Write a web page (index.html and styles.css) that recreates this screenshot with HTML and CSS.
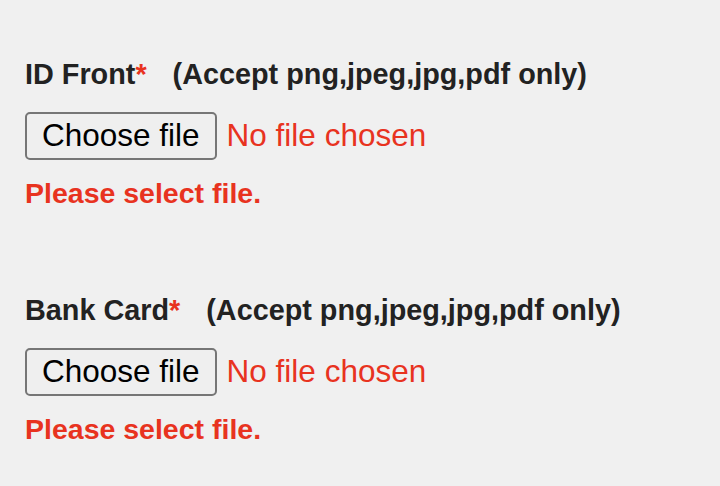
FILE: index.html
```html
<!DOCTYPE html>
<html lang="en">
<head>
<meta charset="utf-8">
<title>Upload documents</title>
<link rel="stylesheet" href="styles.css">
</head>
<body>
<form class="upload-form">
  <div class="field">
    <div class="field-label">ID Front<span class="req">*</span><span class="accept">(Accept png,jpeg,jpg,pdf only)</span></div>
    <label class="file-picker">
      <input class="file-input" type="file" accept=".png,.jpeg,.jpg,.pdf">
      <span class="file-button">Choose file</span>
      <span class="file-status">No file chosen</span>
    </label>
    <div class="error">Please select file.</div>
  </div>
  <div class="field">
    <div class="field-label">Bank Card<span class="req">*</span><span class="accept">(Accept png,jpeg,jpg,pdf only)</span></div>
    <label class="file-picker">
      <input class="file-input" type="file" accept=".png,.jpeg,.jpg,.pdf">
      <span class="file-button">Choose file</span>
      <span class="file-status">No file chosen</span>
    </label>
    <div class="error">Please select file.</div>
  </div>
</form>
</body>
</html>
```
FILE: styles.css
```css
html, body {
  margin: 0;
  padding: 0;
  background: #f0f0f0;
}
body {
  font-family: "Liberation Sans", Arial, Helvetica, sans-serif;
  width: 720px;
  height: 486px;
  overflow: hidden;
}
.upload-form {
  display: flex;
  flex-direction: column;
  gap: 83px;
  padding: 57px 0 0 25px;
}
.field {
  display: flex;
  flex-direction: column;
  align-items: flex-start;
}
.field-label {
  font-size: 28.8px;
  line-height: 34px;
  font-weight: bold;
  color: #222;
  margin-bottom: 21px;
}
.req {
  color: #e8331f;
}
.accept {
  margin-left: 26px;
}
.file-picker {
  display: flex;
  align-items: center;
  gap: 10px;
  margin-bottom: 16px;
  cursor: pointer;
}
.file-input {
  position: absolute;
  width: 1px;
  height: 1px;
  opacity: 0;
  overflow: hidden;
}
.file-button {
  display: block;
  box-sizing: border-box;
  height: 48px;
  font-size: 31.5px;
  line-height: 36px;
  color: #000;
  background: #efefef;
  border: 2px solid #767676;
  border-radius: 5px;
  padding: 3px 15px 5px 15px;
}
.file-status {
  font-size: 31.5px;
  line-height: 36px;
  color: #e8331f;
  padding-bottom: 2px;
}
.error {
  font-size: 28.5px;
  line-height: 34px;
  font-weight: bold;
  color: #e8331f;
}
```
